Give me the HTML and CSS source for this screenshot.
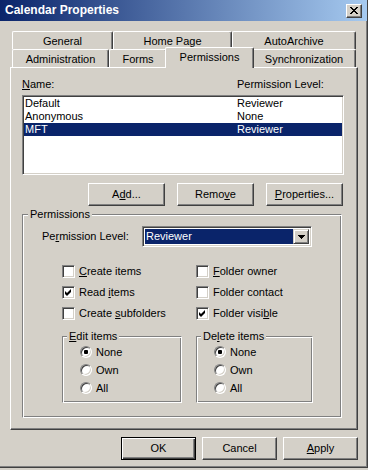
FILE: index.html
```html
<!DOCTYPE html>
<html lang="en">
<head>
  <meta charset="UTF-8">
  <meta name="viewport" content="width=device-width, initial-scale=1.0">
  <title>Calendar Properties</title>
  <link rel="stylesheet" href="styles.css">
</head>
<body>
  <div class="window">
    <div class="titlebar">
      <span class="title">Calendar Properties</span>
      <span class="close-btn">
        <svg width="8" height="7" viewBox="0 0 8 7">
          <path d="M0 0h2v1H0z M6 0h2v1H6z M1 1h2v1H1z M5 1h2v1H5z M2 2h4v1H2z M3 3h2v1H3z M2 4h4v1H2z M1 5h2v1H1z M5 5h2v1H5z M0 6h2v1H0z M6 6h2v1H6z" fill="#000"/>
        </svg>
      </span>
    </div>

    <div class="content">
      <!-- two rows of tabs, the row with the open tab sits next to the panel -->
      <div class="tab-row">
        <div class="tab tab-general">General</div>
        <div class="tab tab-homepage">Home Page</div>
        <div class="tab tab-archive">AutoArchive</div>
      </div>
      <div class="tab-row">
        <div class="tab tab-admin">Administration</div>
        <div class="tab tab-forms">Forms</div>
        <div class="tab tab-perms active">Permissions</div>
        <div class="tab tab-sync">Synchronization</div>
      </div>

      <div class="panel">
        <div class="list-head">
          <span class="col-name"><u>N</u>ame:</span>
          <span>Permission Level:</span>
        </div>
        <div class="listbox">
          <div class="list-row"><span>Default</span><span>Reviewer</span></div>
          <div class="list-row"><span>Anonymous</span><span>None</span></div>
          <div class="list-row selected"><span>MFT</span><span>Reviewer</span></div>
        </div>

        <div class="list-buttons">
          <button class="btn">A<u>d</u>d...</button>
          <button class="btn">Remo<u>v</u>e</button>
          <button class="btn"><u>P</u>roperties...</button>
        </div>

        <div class="group perms">
          <div class="group-label">Permissions</div>

          <div class="level-row">
            <span class="level-label">Pe<u>r</u>mission Level:</span>
            <div class="combo">
              <span class="combo-value">Reviewer</span>
              <span class="combo-arrow">
                <svg width="7" height="4" viewBox="0 0 7 4">
                  <path d="M0 0h7v1h-1v1h-1v1h-1v1h-1v-1h-1v-1h-1v-1h-1z" fill="#000"/>
                </svg>
              </span>
            </div>
          </div>

          <div class="checks">
            <div class="check"><span class="box"></span><span><u>C</u>reate items</span></div>
            <div class="check"><span class="box"></span><span><u>F</u>older owner</span></div>
            <div class="check">
              <span class="box"><svg width="11" height="11" viewBox="0 0 11 11"><path d="M2 4l2 2l4-4v3l-4 4l-2-2z" fill="#000"/></svg></span>
              <span>Read <u>i</u>tems</span>
            </div>
            <div class="check"><span class="box"></span><span>Folder contact</span></div>
            <div class="check"><span class="box"></span><span>Create <u>s</u>ubfolders</span></div>
            <div class="check">
              <span class="box"><svg width="11" height="11" viewBox="0 0 11 11"><path d="M2 4l2 2l4-4v3l-4 4l-2-2z" fill="#000"/></svg></span>
              <span>Folder visi<u>b</u>le</span>
            </div>
          </div>

          <div class="subgroups">
            <div class="group sub edit">
              <div class="group-label"><u>E</u>dit items</div>
              <div class="radio-row"><span class="radio on"></span><span>None</span></div>
              <div class="radio-row"><span class="radio"></span><span>Own</span></div>
              <div class="radio-row"><span class="radio"></span><span>All</span></div>
            </div>
            <div class="group sub delete">
              <div class="group-label">De<u>l</u>ete items</div>
              <div class="radio-row"><span class="radio on"></span><span>None</span></div>
              <div class="radio-row"><span class="radio"></span><span>Own</span></div>
              <div class="radio-row"><span class="radio"></span><span>All</span></div>
            </div>
          </div>
        </div>
      </div>

      <div class="dialog-buttons">
        <button class="btn default">OK</button>
        <button class="btn">Cancel</button>
        <button class="btn"><u>A</u>pply</button>
      </div>
    </div>
  </div>
</body>
</html>
```

FILE: styles.css
```css
* {
  box-sizing: border-box;
}
body {
  margin: 0;
  background: #d4d0c8;
  font-family: "Liberation Sans", Arial, sans-serif;
  font-size: 11px;
  line-height: 13px;
  color: #000;
}
u {
  text-underline-offset: 1px;
}
.window {
  width: 368px;
  height: 468px;
  background: #d4d0c8;
  border-right: 1px solid #404040;
  border-bottom: 1px solid #404040;
  box-shadow: inset -1px -1px #808080;
}

/* title bar */
.titlebar {
  height: 21px;
  display: flex;
  align-items: center;
  justify-content: space-between;
  padding: 0 5px 0 5px;
  background: linear-gradient(90deg, #0a246a, #a6caf0);
}
.title {
  color: #fff;
  font-weight: bold;
  font-size: 12px;
}
.close-btn {
  width: 16px;
  height: 14px;
  display: flex;
  align-items: center;
  justify-content: center;
  background: #d4d0c8;
  border: 1px solid;
  border-color: #fff #404040 #404040 #fff;
  box-shadow: inset -1px -1px #808080;
}

.content {
  padding: 10px 0 0 10px;
}

/* tabs */
.tab-row {
  display: flex;
  height: 18px;
  margin-left: 2px;
}
.tab {
  height: 18px;
  padding-top: 3px;
  text-align: center;
  background: #d4d0c8;
  border-top: 1px solid #fff;
  border-left: 1px solid #fff;
  border-right: 1px solid #404040;
  border-radius: 2px 2px 0 0;
  box-shadow: inset -1px 0 #808080;
}
.tab-general { width: 101px; }
.tab-homepage { width: 119px; }
.tab-archive { width: 124px; }
.tab-admin { width: 97px; }
.tab-forms { width: 58px; }
.tab-sync { width: 104px; }
.tab.active {
  width: 89px;
  height: 21px;
  margin: -2px -2px -1px;
  position: relative;
  z-index: 1;
}

.panel {
  width: 348px;
  height: 363px;
  padding: 10px 0 0 11px;
  border: 1px solid;
  border-color: #fff #404040 #404040 #fff;
  box-shadow: inset -1px -1px #808080;
}

/* list of users */
.list-head {
  display: flex;
}
.col-name {
  width: 215px;
}
.listbox {
  width: 322px;
  height: 80px;
  margin-top: 4px;
  padding: 1px;
  background: #fff;
  border: 1px solid;
  border-color: #808080 #fff #fff #808080;
  box-shadow: inset 1px 1px #404040, inset -1px -1px #d4d0c8;
}
.list-row {
  display: grid;
  grid-template-columns: 212px 1fr;
  height: 13px;
  padding-left: 1px;
}
.list-row.selected {
  background: #0a246a;
  color: #fff;
}

/* buttons */
.btn {
  width: 77px;
  height: 23px;
  padding: 0;
  font: inherit;
  color: #000;
  background: #d4d0c8;
  border: 1px solid;
  border-color: #fff #404040 #404040 #fff;
  box-shadow: inset -1px -1px #808080;
}
.list-buttons {
  display: flex;
  justify-content: flex-end;
  gap: 12px;
  width: 321px;
  margin-top: 8px;
}
.dialog-buttons {
  display: flex;
  justify-content: flex-end;
  gap: 6px;
  width: 348px;
  margin-top: 7px;
}
.dialog-buttons .btn {
  width: 75px;
}
.btn.default {
  border-color: #000;
  box-shadow: inset 1px 1px #fff, inset -1px -1px #404040, inset -2px -2px #808080;
}

/* etched group boxes */
.group {
  border: 1px solid;
  border-color: #808080 #fff #fff #808080;
  box-shadow: inset 1px 1px #fff, inset -1px -1px #808080;
}
.group-label {
  width: fit-content;
  margin: -7px 0 0 5px;
  padding: 0 2px;
  background: #d4d0c8;
}
.perms {
  width: 320px;
  margin-top: 8px;
  padding-bottom: 14px;
}

.level-row {
  display: flex;
  align-items: center;
  margin: 5px 0 0 19px;
}
.level-label {
  width: 100px;
}
.combo {
  width: 170px;
  height: 21px;
  display: flex;
  padding: 2px;
  background: #fff;
  border: 1px solid;
  border-color: #808080 #fff #fff #808080;
  box-shadow: inset 1px 1px #404040, inset -1px -1px #d4d0c8;
}
.combo-value {
  flex: 1;
  padding-left: 1px;
  line-height: 15px;
  background: #0a246a;
  color: #fff;
}
.combo-arrow {
  width: 16px;
  display: flex;
  align-items: center;
  justify-content: center;
  background: #d4d0c8;
  border: 1px solid;
  border-color: #d4d0c8 #404040 #404040 #d4d0c8;
  box-shadow: inset 1px 1px #fff, inset -1px -1px #808080;
}

/* check boxes */
.checks {
  display: grid;
  grid-template-columns: 134px 1fr;
  margin: 14px 0 0 39px;
}
.check {
  display: flex;
  align-items: center;
  gap: 4px;
  height: 21px;
}
.box {
  width: 13px;
  height: 13px;
  display: flex;
  background: #fff;
  border: 1px solid;
  border-color: #808080 #fff #fff #808080;
  box-shadow: inset 1px 1px #404040, inset -1px -1px #d4d0c8;
}

/* radio groups */
.subgroups {
  display: flex;
  margin: 12px 0 0 39px;
}
.sub {
  padding-bottom: 5px;
}
.sub .group-label {
  margin-left: 4px;
}
.edit {
  width: 120px;
}
.delete {
  width: 117px;
  margin-left: 14px;
}
.radio-row {
  display: flex;
  align-items: center;
  gap: 4px;
  height: 18px;
  padding-left: 17px;
}
.radio {
  width: 12px;
  height: 12px;
  border-radius: 50%;
  background: #fff;
  border: 1px solid;
  border-color: #808080 #fff #fff #808080;
  box-shadow: inset 1px 1px #404040, inset -1px -1px #d4d0c8;
}
.radio.on {
  background: radial-gradient(circle, #000 2px, #fff 2.5px);
}
```
